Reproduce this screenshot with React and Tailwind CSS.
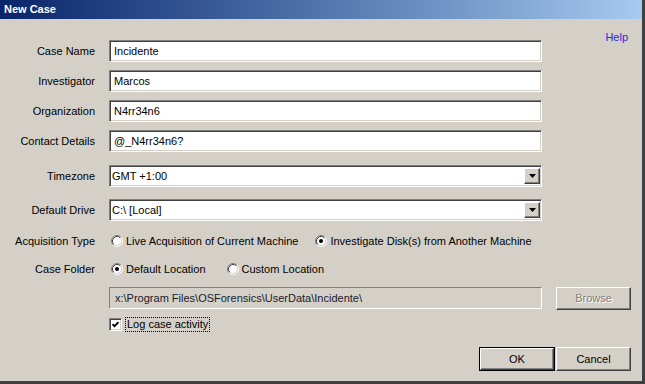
import React from "react";

const sunken =
  "border border-t-[#808080] border-l-[#808080] border-b-white border-r-white shadow-[inset_1px_1px_0_#404040,inset_-1px_-1px_0_#d4d0c8]";
const raised =
  "border border-t-white border-l-white border-b-[#404040] border-r-[#404040] shadow-[inset_-1px_-1px_0_#808080]";

const Label = ({ children }) => (
  <div className="w-[95px] shrink-0 text-right">{children}</div>
);

const TextField = ({ value }) => (
  <div className={`w-[433px] h-[22px] bg-white flex items-center pl-[4px] ${sunken}`}>
    {value}
  </div>
);

const Select = ({ value }) => (
  <div className={`w-[433px] h-[22px] bg-white flex items-center pl-[2px] pr-[1px] ${sunken}`}>
    <span className="flex-1">{value}</span>
    <div className={`w-[16px] h-[16px] bg-[#d4d0c8] flex items-center justify-center ${raised}`}>
      <svg width="7" height="4" viewBox="0 0 7 4">
        <path d="M0 0H7L3.5 4Z" fill="#000" />
      </svg>
    </div>
  </div>
);

const Radio = ({ checked, children }) => (
  <div className="flex items-center gap-[3px]">
    <svg width="12" height="12" viewBox="0 0 12 12">
      <circle cx="6" cy="6" r="5" fill="#fff" />
      <path d="M2.11 9.89A5.5 5.5 0 0 1 9.89 2.11" stroke="#808080" fill="none" />
      <path d="M9.89 2.11A5.5 5.5 0 0 1 2.11 9.89" stroke="#fff" fill="none" />
      <path d="M2.82 9.18A4.5 4.5 0 0 1 9.18 2.82" stroke="#404040" fill="none" />
      <path d="M9.18 2.82A4.5 4.5 0 0 1 2.82 9.18" stroke="#d4d0c8" fill="none" />
      {checked && <circle cx="6" cy="6" r="2" fill="#000" />}
    </svg>
    <span>{children}</span>
  </div>
);

const Row = ({ label, className = "", children }) => (
  <div className={`flex items-center gap-[14px] ${className}`}>
    <Label>{label}</Label>
    {children}
  </div>
);

export default function App() {
  return (
    <div
      className="w-[645px] h-[384px] bg-[#d4d0c8] text-black text-[11px] leading-[13px] flex flex-col border-r-[3px] border-b-[3px] border-[#404040] overflow-hidden"
      style={{ fontFamily: "'Liberation Sans', Arial, sans-serif" }}
    >
      <div className="h-[19px] shrink-0 bg-gradient-to-r from-[#0a246a] to-[#a6caf0] flex items-center pl-[4px] text-white font-bold text-[11px]">
        New Case
      </div>

      <div className="flex justify-end pr-[14px] mt-[12px] h-[13px]">
        <span className="text-[#2a2ad8]">Help</span>
      </div>

      <Row label="Case Name" className="mt-[-4px]">
        <TextField value="Incidente" />
      </Row>
      <Row label="Investigator" className="mt-[8px]">
        <TextField value="Marcos" />
      </Row>
      <Row label="Organization" className="mt-[8px]">
        <TextField value="N4rr34n6" />
      </Row>
      <Row label="Contact Details" className="mt-[8px]">
        <TextField value="@_N4rr34n6?" />
      </Row>
      <Row label="Timezone" className="mt-[13px]">
        <Select value="GMT +1:00" />
      </Row>
      <Row label="Default Drive" className="mt-[12px]">
        <Select value="C:\ [Local]" />
      </Row>

      <Row label="Acquisition Type" className="mt-[13px] h-[14px]">
        <div className="flex items-center gap-[17px] ml-[2px]">
          <Radio>Live Acquisition of Current Machine</Radio>
          <Radio checked>Investigate Disk(s) from Another Machine</Radio>
        </div>
      </Row>
      <Row label="Case Folder" className="mt-[14px] h-[14px]">
        <div className="flex items-center gap-[21px] ml-[2px]">
          <Radio checked>Default Location</Radio>
          <Radio>Custom Location</Radio>
        </div>
      </Row>

      <div className="flex items-start gap-[14px] mt-[11px] pl-[109px]">
        <div className="w-[433px] h-[22px] flex items-center pl-[5px] border border-t-[#808080] border-l-[#808080] border-b-white border-r-white text-[#1a1a2a]">
          x:\Program Files\OSForensics\UserData\Incidente\
        </div>
        <div
          className={`w-[75px] h-[23px] flex items-center justify-center text-[#808080] [text-shadow:1px_1px_0_#fff] ${raised}`}
        >
          Browse
        </div>
      </div>

      <div className="flex items-center gap-[3px] mt-[7px] pl-[109px] h-[15px]">
        <div className={`w-[13px] h-[13px] bg-white flex items-center justify-center ${sunken}`}>
          <svg width="7" height="7" viewBox="0 0 7 7">
            <path d="M0.5 3.2L2.5 5.2L6.5 1.2" stroke="#000" strokeWidth="1.8" fill="none" />
          </svg>
        </div>
        <span className="border border-dotted border-black px-[1px] h-[15px] flex items-center">
          Log case activity
        </span>
      </div>

      <div className="flex justify-end gap-[1px] mt-[15px] pr-[11px]">
        <div className="w-[76px] h-[24px] border border-black">
          <div className={`w-full h-full flex items-center justify-center ${raised}`}>OK</div>
        </div>
        <div className={`w-[75px] h-[24px] flex items-center justify-center ${raised}`}>
          Cancel
        </div>
      </div>
    </div>
  );
}
